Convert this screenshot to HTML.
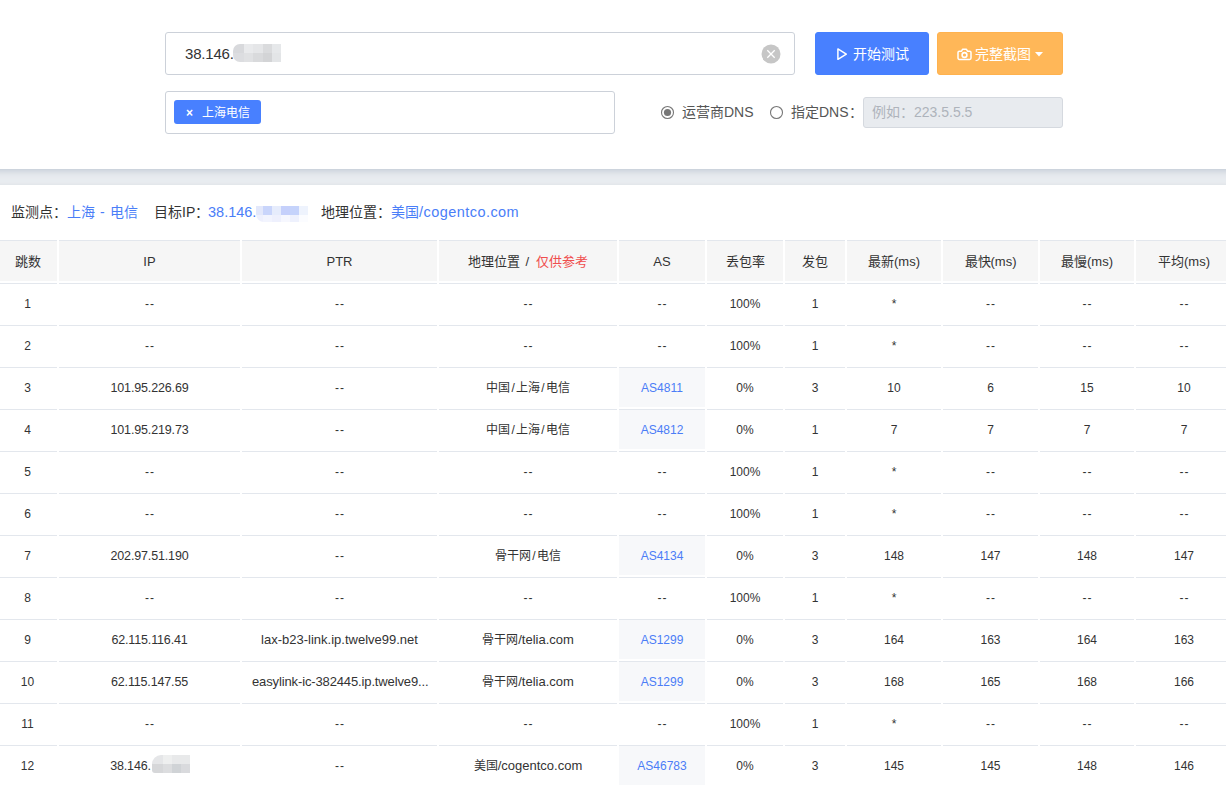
<!DOCTYPE html>
<html lang="zh-CN"><head><meta charset="utf-8">
<style>
*{margin:0;padding:0;box-sizing:border-box}
html,body{width:1226px;height:785px;overflow:hidden;background:#fff}
body{font-family:"Liberation Sans",sans-serif;color:#333;position:relative}
.abs{position:absolute}
.inp{position:absolute;border:1px solid #ccd1d9;border-radius:3px;background:#fff}
.btn{position:absolute;border-radius:3px;color:#fff;font-size:14px;line-height:43px;white-space:nowrap}
.band{position:absolute;left:0;top:169px;width:1226px;height:16px;background:linear-gradient(#cdd4dd 0px 1px,#d3d9e1 1px 2px,#d7dce4 2px 3px,#dbe0e6 3px 4px,#dfe3e8 4px 5px,#e2e6eb 5px 6px,#e4e8ed 6px 7px,#e6e9ee 7px 8px,#e7eaef 8px 9px,#e8ebef 9px 10px,#e8ecf0 10px 11px,#e8ecf0 11px 12px,#e8ecf0 12px 13px,#e8ebef 13px 14px,#e6e9ed 14px 15px,#e3e7eb 15px 16px)}
.info{position:absolute;left:11px;top:203px;font-size:14px;line-height:18px;white-space:nowrap;color:#333}
.blue{color:#4a7ef8}
.red{color:#f04e4e}
.c{position:absolute;text-align:center;white-space:nowrap;overflow:hidden;border-top:1px solid #e3e7ed}
.h{height:41px;background:#f6f6f6;font-size:13px;line-height:42px;color:#333}
.b{height:40px;font-size:12px;line-height:41px;color:#333;padding:0 10px}
.as{background:#f7f8fa;color:#4b7df7}
.dd{letter-spacing:1px;margin-right:-1px}
.ip{font-size:12.5px;letter-spacing:-0.15px;line-height:1}
.lt{font-size:13px;line-height:1}
.lt2{letter-spacing:-0.13px}
.sl{margin:0 1.2px}
.blur{display:inline-block;vertical-align:top}
.blk{position:absolute}
</style></head><body>
<div class="inp" style="left:165px;top:32px;width:630px;height:43px"></div>
<div class="abs" style="left:185px;top:45px;font-size:15px;line-height:18px;color:#333;letter-spacing:-0.2px">38.146.</div>
<div class="blk" style="left:233px;top:44px;width:48px;height:18px;overflow:hidden;border-radius:7px 0 0 7px">
 <div class="blk" style="left:0;top:0;width:11px;height:9px;background:#d8d9dc"></div>
 <div class="blk" style="left:11px;top:0;width:9px;height:9px;background:#e9eaec"></div>
 <div class="blk" style="left:20px;top:0;width:10px;height:9px;background:#e5e6e8"></div>
 <div class="blk" style="left:30px;top:0;width:9px;height:9px;background:#dadbdd"></div>
 <div class="blk" style="left:39px;top:0;width:9px;height:9px;background:#e6e8ea"></div>
 <div class="blk" style="left:0;top:9px;width:11px;height:9px;background:#dcdde0"></div>
 <div class="blk" style="left:11px;top:9px;width:9px;height:9px;background:#e0e1e3"></div>
 <div class="blk" style="left:20px;top:9px;width:10px;height:9px;background:#d9dadc"></div>
 <div class="blk" style="left:30px;top:9px;width:9px;height:9px;background:#d3d4d6"></div>
 <div class="blk" style="left:39px;top:9px;width:9px;height:9px;background:#e3e5e7"></div>
</div>
<svg class="abs" style="left:761px;top:44px" width="20" height="20" viewBox="0 0 20 20"><circle cx="10" cy="10" r="9.5" fill="#c6c6c6"/><path d="M6.3 6.3L13.7 13.7M13.7 6.3L6.3 13.7" stroke="#fff" stroke-width="1.3"/></svg>
<div class="btn" style="left:815px;top:32px;width:114px;height:43px;background:#4880ff;border:1px solid #4580ff">
 <svg class="abs" style="left:21px;top:15px" width="12" height="13" viewBox="0 0 12 13"><path d="M0.9 0.9L9.3 6.1L0.9 11.3Z" fill="none" stroke="#fff" stroke-width="1.5" stroke-linejoin="round"/></svg>
 <span class="abs" style="left:37px;top:0">开始测试</span>
</div>
<div class="btn" style="left:937px;top:32px;width:126px;height:43px;background:#ffb758;border:1px solid #ffb24e">
 <svg class="abs" style="left:19px;top:15px" width="15" height="13" viewBox="0 0 15 13"><path d="M2.3 3.2h2.2l1.2-2h3.6l1.2 2h2.2a1.3 1.3 0 0 1 1.3 1.3v5.6a1.3 1.3 0 0 1-1.3 1.3H2.3a1.3 1.3 0 0 1-1.3-1.3V4.5a1.3 1.3 0 0 1 1.3-1.3z" fill="none" stroke="#fff" stroke-width="1.5" stroke-linejoin="round"/><circle cx="7.5" cy="7" r="2.4" fill="none" stroke="#fff" stroke-width="1.6"/></svg>
 <span class="abs" style="left:37px;top:0">完整截图</span>
 <svg class="abs" style="left:97px;top:19px" width="8" height="5" viewBox="0 0 8 5"><path d="M0 0h8L4 4.5z" fill="#fff"/></svg>
</div>
<div class="inp" style="left:165px;top:91px;width:450px;height:43px"></div>
<div class="abs" style="left:174px;top:100px;width:87px;height:24px;background:#4880ff;border-radius:3px;color:#fff;font-size:12px;line-height:24px">
 <span class="abs" style="left:12px;top:1px;font-weight:bold;font-size:12px">×</span>
 <span class="abs" style="left:28px;top:1px">上海电信</span>
</div>
<svg class="abs" style="left:660px;top:105px" width="15" height="15" viewBox="0 0 15 15"><circle cx="7.5" cy="7.5" r="6" fill="none" stroke="#777" stroke-width="1.1"/><circle cx="7.5" cy="7.5" r="3.6" fill="#777"/></svg>
<span class="abs" style="left:682px;top:103px;font-size:14px;line-height:18px;color:#555">运营商DNS</span>
<svg class="abs" style="left:769px;top:105px" width="15" height="15" viewBox="0 0 15 15"><circle cx="7.5" cy="7.5" r="6" fill="none" stroke="#777" stroke-width="1.1"/></svg>
<span class="abs" style="left:791px;top:103px;font-size:14px;line-height:18px;color:#555">指定DNS：</span>
<div class="inp" style="left:863px;top:97px;width:200px;height:31px;background:#e8ebef;border-color:#d5d9df"></div>
<span class="abs" style="left:872px;top:103px;font-size:14px;line-height:18px;color:#aeb3bb">例如：223.5.5.5</span>
<div class="band"></div>
<div class="info">监测点：<span class="blue">上海<span style="letter-spacing:1px"> - </span>电信</span></div>
<div class="info" style="left:154px">目标IP：</div><div class="info blue" style="left:208px;font-size:14.5px">38.146.</div>
<div class="blk" style="left:256px;top:206px;width:52px;height:16px;overflow:hidden;border-radius:0 0 0 8px">
 <div class="blk" style="left:0;top:0;width:7px;height:9px;background:#e3e8fb"></div>
 <div class="blk" style="left:7px;top:0;width:9px;height:9px;background:#c9d5fb"></div>
 <div class="blk" style="left:16px;top:0;width:9px;height:9px;background:#e6ecfc"></div>
 <div class="blk" style="left:25px;top:0;width:9px;height:9px;background:#c5d0fb"></div>
 <div class="blk" style="left:34px;top:0;width:9px;height:9px;background:#c5d3fb"></div>
 <div class="blk" style="left:43px;top:0;width:9px;height:9px;background:#eef3fd"></div>
 <div class="blk" style="left:0;top:9px;width:7px;height:7px;background:#eef0fd"></div>
 <div class="blk" style="left:7px;top:9px;width:9px;height:7px;background:#f2f4fe"></div>
 <div class="blk" style="left:16px;top:9px;width:9px;height:7px;background:#eef0fd"></div>
 <div class="blk" style="left:25px;top:9px;width:9px;height:7px;background:#f6f7fe"></div>
 <div class="blk" style="left:34px;top:9px;width:9px;height:7px;background:#eef1fd"></div>
 <div class="blk" style="left:43px;top:9px;width:9px;height:7px;background:#fbfcff"></div>
</div>
<div class="info" style="left:321px">地理位置：<span class="blue">美国<span style="font-size:14.5px;letter-spacing:0.45px">/cogentco.com</span></span></div>
<div class="c h" style="left:-2px;top:240px;width:59px">跳数</div>
<div class="c h" style="left:59px;top:240px;width:181px">IP</div>
<div class="c h" style="left:242px;top:240px;width:195px">PTR</div>
<div class="c h" style="left:439px;top:240px;width:178px">地理位置<span style="letter-spacing:1.5px"> / </span><span class="red">仅供参考</span></div>
<div class="c h" style="left:619px;top:240px;width:86px">AS</div>
<div class="c h" style="left:707px;top:240px;width:76px">丢包率</div>
<div class="c h" style="left:785px;top:240px;width:60px">发包</div>
<div class="c h" style="left:847px;top:240px;width:94px">最新(ms)</div>
<div class="c h" style="left:943px;top:240px;width:95px">最快(ms)</div>
<div class="c h" style="left:1040px;top:240px;width:94px">最慢(ms)</div>
<div class="c h" style="left:1136px;top:240px;width:96px">平均(ms)</div>
<div class="c b" style="left:-2px;top:283px;width:59px">1</div>
<div class="c b" style="left:59px;top:283px;width:181px"><span class="dd">--</span></div>
<div class="c b" style="left:242px;top:283px;width:195px"><span class="dd">--</span></div>
<div class="c b" style="left:439px;top:283px;width:178px"><span class="dd">--</span></div>
<div class="c b" style="left:619px;top:283px;width:86px"><span class="dd">--</span></div>
<div class="c b" style="left:707px;top:283px;width:76px">100%</div>
<div class="c b" style="left:785px;top:283px;width:60px">1</div>
<div class="c b" style="left:847px;top:283px;width:94px">*</div>
<div class="c b" style="left:943px;top:283px;width:95px"><span class="dd">--</span></div>
<div class="c b" style="left:1040px;top:283px;width:94px"><span class="dd">--</span></div>
<div class="c b" style="left:1136px;top:283px;width:96px"><span class="dd">--</span></div>
<div class="c b" style="left:-2px;top:325px;width:59px">2</div>
<div class="c b" style="left:59px;top:325px;width:181px"><span class="dd">--</span></div>
<div class="c b" style="left:242px;top:325px;width:195px"><span class="dd">--</span></div>
<div class="c b" style="left:439px;top:325px;width:178px"><span class="dd">--</span></div>
<div class="c b" style="left:619px;top:325px;width:86px"><span class="dd">--</span></div>
<div class="c b" style="left:707px;top:325px;width:76px">100%</div>
<div class="c b" style="left:785px;top:325px;width:60px">1</div>
<div class="c b" style="left:847px;top:325px;width:94px">*</div>
<div class="c b" style="left:943px;top:325px;width:95px"><span class="dd">--</span></div>
<div class="c b" style="left:1040px;top:325px;width:94px"><span class="dd">--</span></div>
<div class="c b" style="left:1136px;top:325px;width:96px"><span class="dd">--</span></div>
<div class="c b" style="left:-2px;top:367px;width:59px">3</div>
<div class="c b" style="left:59px;top:367px;width:181px"><span class="ip">101.95.226.69</span></div>
<div class="c b" style="left:242px;top:367px;width:195px"><span class="dd">--</span></div>
<div class="c b" style="left:439px;top:367px;width:178px">中国<span class="sl">/</span>上海<span class="sl">/</span>电信</div>
<div class="c b as" style="left:619px;top:367px;width:86px">AS4811</div>
<div class="c b" style="left:707px;top:367px;width:76px">0%</div>
<div class="c b" style="left:785px;top:367px;width:60px">3</div>
<div class="c b" style="left:847px;top:367px;width:94px">10</div>
<div class="c b" style="left:943px;top:367px;width:95px">6</div>
<div class="c b" style="left:1040px;top:367px;width:94px">15</div>
<div class="c b" style="left:1136px;top:367px;width:96px">10</div>
<div class="c b" style="left:-2px;top:409px;width:59px">4</div>
<div class="c b" style="left:59px;top:409px;width:181px"><span class="ip">101.95.219.73</span></div>
<div class="c b" style="left:242px;top:409px;width:195px"><span class="dd">--</span></div>
<div class="c b" style="left:439px;top:409px;width:178px">中国<span class="sl">/</span>上海<span class="sl">/</span>电信</div>
<div class="c b as" style="left:619px;top:409px;width:86px">AS4812</div>
<div class="c b" style="left:707px;top:409px;width:76px">0%</div>
<div class="c b" style="left:785px;top:409px;width:60px">1</div>
<div class="c b" style="left:847px;top:409px;width:94px">7</div>
<div class="c b" style="left:943px;top:409px;width:95px">7</div>
<div class="c b" style="left:1040px;top:409px;width:94px">7</div>
<div class="c b" style="left:1136px;top:409px;width:96px">7</div>
<div class="c b" style="left:-2px;top:451px;width:59px">5</div>
<div class="c b" style="left:59px;top:451px;width:181px"><span class="dd">--</span></div>
<div class="c b" style="left:242px;top:451px;width:195px"><span class="dd">--</span></div>
<div class="c b" style="left:439px;top:451px;width:178px"><span class="dd">--</span></div>
<div class="c b" style="left:619px;top:451px;width:86px"><span class="dd">--</span></div>
<div class="c b" style="left:707px;top:451px;width:76px">100%</div>
<div class="c b" style="left:785px;top:451px;width:60px">1</div>
<div class="c b" style="left:847px;top:451px;width:94px">*</div>
<div class="c b" style="left:943px;top:451px;width:95px"><span class="dd">--</span></div>
<div class="c b" style="left:1040px;top:451px;width:94px"><span class="dd">--</span></div>
<div class="c b" style="left:1136px;top:451px;width:96px"><span class="dd">--</span></div>
<div class="c b" style="left:-2px;top:493px;width:59px">6</div>
<div class="c b" style="left:59px;top:493px;width:181px"><span class="dd">--</span></div>
<div class="c b" style="left:242px;top:493px;width:195px"><span class="dd">--</span></div>
<div class="c b" style="left:439px;top:493px;width:178px"><span class="dd">--</span></div>
<div class="c b" style="left:619px;top:493px;width:86px"><span class="dd">--</span></div>
<div class="c b" style="left:707px;top:493px;width:76px">100%</div>
<div class="c b" style="left:785px;top:493px;width:60px">1</div>
<div class="c b" style="left:847px;top:493px;width:94px">*</div>
<div class="c b" style="left:943px;top:493px;width:95px"><span class="dd">--</span></div>
<div class="c b" style="left:1040px;top:493px;width:94px"><span class="dd">--</span></div>
<div class="c b" style="left:1136px;top:493px;width:96px"><span class="dd">--</span></div>
<div class="c b" style="left:-2px;top:535px;width:59px">7</div>
<div class="c b" style="left:59px;top:535px;width:181px"><span class="ip">202.97.51.190</span></div>
<div class="c b" style="left:242px;top:535px;width:195px"><span class="dd">--</span></div>
<div class="c b" style="left:439px;top:535px;width:178px">骨干网<span class="sl">/</span>电信</div>
<div class="c b as" style="left:619px;top:535px;width:86px">AS4134</div>
<div class="c b" style="left:707px;top:535px;width:76px">0%</div>
<div class="c b" style="left:785px;top:535px;width:60px">3</div>
<div class="c b" style="left:847px;top:535px;width:94px">148</div>
<div class="c b" style="left:943px;top:535px;width:95px">147</div>
<div class="c b" style="left:1040px;top:535px;width:94px">148</div>
<div class="c b" style="left:1136px;top:535px;width:96px">147</div>
<div class="c b" style="left:-2px;top:577px;width:59px">8</div>
<div class="c b" style="left:59px;top:577px;width:181px"><span class="dd">--</span></div>
<div class="c b" style="left:242px;top:577px;width:195px"><span class="dd">--</span></div>
<div class="c b" style="left:439px;top:577px;width:178px"><span class="dd">--</span></div>
<div class="c b" style="left:619px;top:577px;width:86px"><span class="dd">--</span></div>
<div class="c b" style="left:707px;top:577px;width:76px">100%</div>
<div class="c b" style="left:785px;top:577px;width:60px">1</div>
<div class="c b" style="left:847px;top:577px;width:94px">*</div>
<div class="c b" style="left:943px;top:577px;width:95px"><span class="dd">--</span></div>
<div class="c b" style="left:1040px;top:577px;width:94px"><span class="dd">--</span></div>
<div class="c b" style="left:1136px;top:577px;width:96px"><span class="dd">--</span></div>
<div class="c b" style="left:-2px;top:619px;width:59px">9</div>
<div class="c b" style="left:59px;top:619px;width:181px"><span class="ip">62.115.116.41</span></div>
<div class="c b" style="left:242px;top:619px;width:195px"><span class="lt">lax-b23-link.ip.twelve99.net</span></div>
<div class="c b" style="left:439px;top:619px;width:178px">骨干网<span class="lt">/telia.com</span></div>
<div class="c b as" style="left:619px;top:619px;width:86px">AS1299</div>
<div class="c b" style="left:707px;top:619px;width:76px">0%</div>
<div class="c b" style="left:785px;top:619px;width:60px">3</div>
<div class="c b" style="left:847px;top:619px;width:94px">164</div>
<div class="c b" style="left:943px;top:619px;width:95px">163</div>
<div class="c b" style="left:1040px;top:619px;width:94px">164</div>
<div class="c b" style="left:1136px;top:619px;width:96px">163</div>
<div class="c b" style="left:-2px;top:661px;width:59px">10</div>
<div class="c b" style="left:59px;top:661px;width:181px"><span class="ip">62.115.147.55</span></div>
<div class="c b" style="left:242px;top:661px;width:195px"><span class="lt lt2">easylink-ic-382445.ip.twelve9...</span></div>
<div class="c b" style="left:439px;top:661px;width:178px">骨干网<span class="lt">/telia.com</span></div>
<div class="c b as" style="left:619px;top:661px;width:86px">AS1299</div>
<div class="c b" style="left:707px;top:661px;width:76px">0%</div>
<div class="c b" style="left:785px;top:661px;width:60px">3</div>
<div class="c b" style="left:847px;top:661px;width:94px">168</div>
<div class="c b" style="left:943px;top:661px;width:95px">165</div>
<div class="c b" style="left:1040px;top:661px;width:94px">168</div>
<div class="c b" style="left:1136px;top:661px;width:96px">166</div>
<div class="c b" style="left:-2px;top:703px;width:59px">11</div>
<div class="c b" style="left:59px;top:703px;width:181px"><span class="dd">--</span></div>
<div class="c b" style="left:242px;top:703px;width:195px"><span class="dd">--</span></div>
<div class="c b" style="left:439px;top:703px;width:178px"><span class="dd">--</span></div>
<div class="c b" style="left:619px;top:703px;width:86px"><span class="dd">--</span></div>
<div class="c b" style="left:707px;top:703px;width:76px">100%</div>
<div class="c b" style="left:785px;top:703px;width:60px">1</div>
<div class="c b" style="left:847px;top:703px;width:94px">*</div>
<div class="c b" style="left:943px;top:703px;width:95px"><span class="dd">--</span></div>
<div class="c b" style="left:1040px;top:703px;width:94px"><span class="dd">--</span></div>
<div class="c b" style="left:1136px;top:703px;width:96px"><span class="dd">--</span></div>
<div class="c b" style="left:-2px;top:745px;width:59px">12</div>
<div class="c b" style="left:59px;top:745px;width:181px"><span class="ip">38.146.</span><span style="display:inline-block;width:38px;height:10px"></span></div>
<div class="c b" style="left:242px;top:745px;width:195px"><span class="dd">--</span></div>
<div class="c b" style="left:439px;top:745px;width:178px">美国<span class="lt">/cogentco.com</span></div>
<div class="c b as" style="left:619px;top:745px;width:86px">AS46783</div>
<div class="c b" style="left:707px;top:745px;width:76px">0%</div>
<div class="c b" style="left:785px;top:745px;width:60px">3</div>
<div class="c b" style="left:847px;top:745px;width:94px">145</div>
<div class="c b" style="left:943px;top:745px;width:95px">145</div>
<div class="c b" style="left:1040px;top:745px;width:94px">148</div>
<div class="c b" style="left:1136px;top:745px;width:96px">146</div>
<div class="blk" style="left:152px;top:755px;width:38px;height:18px;overflow:hidden;border-radius:9px 0 0 3px">
 <div class="blk" style="left:0;top:0;width:11px;height:9px;background:#e5e6e8"></div>
 <div class="blk" style="left:11px;top:0;width:9px;height:9px;background:#eeefef"></div>
 <div class="blk" style="left:20px;top:0;width:9px;height:9px;background:#e8e9ea"></div>
 <div class="blk" style="left:29px;top:0;width:9px;height:9px;background:#e8e9ea"></div>
 <div class="blk" style="left:0;top:9px;width:11px;height:9px;background:#d6d7d9"></div>
 <div class="blk" style="left:11px;top:9px;width:9px;height:9px;background:#dcdddf"></div>
 <div class="blk" style="left:20px;top:9px;width:9px;height:9px;background:#d0d3d6"></div>
 <div class="blk" style="left:29px;top:9px;width:9px;height:9px;background:#d9dadd"></div>
</div>
</body></html>
